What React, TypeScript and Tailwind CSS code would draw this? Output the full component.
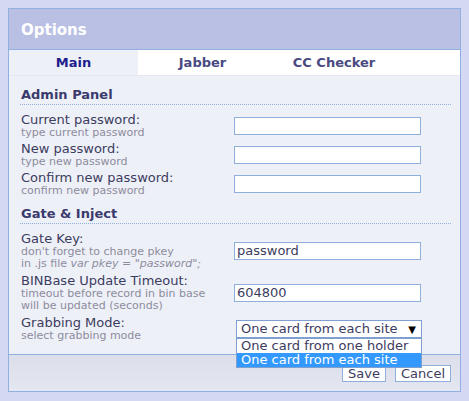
import React from 'react';

interface FieldRowProps {
    label: string;
    hint: React.ReactNode;
    children: React.ReactNode;
}

const FieldRow = ({ label, hint, children }: FieldRowProps) => (
    <div className="grid grid-cols-[213px_1fr] items-center">
        <div>
            <p className="text-[13px] leading-[14px] text-[#3c3c5e]">{label}</p>
            <p className="text-[11px] leading-[12px] text-[#8c8c9c]">{hint}</p>
        </div>
        <div>{children}</div>
    </div>
);

const TextInput = ({ value = '' }: { value?: string }) => (
    <div className="w-[187px] h-[18px] bg-white border border-[#8fb0dc] px-[2px] text-[13px] leading-[16px] text-[#3c3c5e]">
        {value}
    </div>
);

const SectionTitle = ({ children }: { children: React.ReactNode }) => (
    <h2 className="text-[13px] font-bold leading-[16px] text-[#3a3a6c] pb-[1px] border-b border-dotted border-[#8fb0dc] mr-[9px] -ml-[1px] pl-[1px]">
        {children}
    </h2>
);

const App = () => {
    return (
        <div className="min-h-[401px] bg-[#d4d8f2] p-2 font-['DejaVu_Sans',Verdana,sans-serif]">
            <div className="w-[453px] border border-[#8fb0e0] bg-[#eef0f8]">
                {/* header */}
                <div className="h-[41px] bg-[#b9c0e3] flex items-center pl-3 pt-[2px] border-b border-[#8fb0e0]">
                    <h1 className="text-[15px] font-bold text-white">Options</h1>
                </div>

                {/* tabs */}
                <div className="flex h-[26px] bg-white border-b border-[#e6e7f0]">
                    <div className="w-[129px] bg-[#eef0f8] flex items-center justify-center pt-[1px] text-[13px] font-bold text-[#1e1e8c]">Main</div>
                    <div className="w-[129px] flex items-center justify-center pt-[1px] text-[13px] font-bold text-[#4a4a82]">Jabber</div>
                    <div className="w-[134px] flex items-center justify-center pt-[1px] text-[13px] font-bold text-[#4a4a82]">CC Checker</div>
                </div>

                {/* content */}
                <div className="pl-3 pt-[11px] pb-[12px]">
                    <SectionTitle>Admin Panel</SectionTitle>
                    <div className="flex flex-col gap-[3px] mt-[8px]">
                        <FieldRow label="Current password:" hint="type current password">
                            <TextInput />
                        </FieldRow>
                        <FieldRow label="New password:" hint="type new password">
                            <TextInput />
                        </FieldRow>
                        <FieldRow label="Confirm new password:" hint="confirm new password">
                            <TextInput />
                        </FieldRow>
                    </div>

                    <div className="mt-[9px]">
                        <SectionTitle>Gate &amp; Inject</SectionTitle>
                    </div>
                    <div className="flex flex-col gap-[4px] mt-[8px]">
                        <FieldRow
                            label="Gate Key:"
                            hint={<>don't forget to change pkey<br />in .js file <i>var pkey = "password";</i></>}
                        >
                            <TextInput value="password" />
                        </FieldRow>
                        <FieldRow
                            label="BINBase Update Timeout:"
                            hint={<>timeout before record in bin base<br />will be updated (seconds)</>}
                        >
                            <TextInput value="604800" />
                        </FieldRow>
                        <FieldRow label="Grabbing Mode:" hint="select grabbing mode">
                            <div className="relative ml-[2px] w-[186px]">
                                <div className="h-[18px] bg-white border border-[#7f9fd0] flex items-center justify-between pl-[4px] pr-[5px] text-[13px] text-[#3c3c5e]">
                                    <span>One card from each site</span>
                                    <span className="text-[10px] text-black">▼</span>
                                </div>
                                <div className="absolute left-0 top-[18px] w-[186px] bg-white border border-[#7f9fd0] text-[13px] leading-[14px] z-10">
                                    <div className="pl-[4px] text-[#3c3c5e]">One card from one holder</div>
                                    <div className="pl-[4px] bg-[#3399ff] text-white">One card from each site</div>
                                </div>
                            </div>
                        </FieldRow>
                    </div>
                </div>

                {/* footer */}
                <div className="h-[37px] border-t border-[#8fb0e0] bg-gradient-to-b from-[#dcdeea] to-[#e4e6f2] flex items-center justify-end gap-[9px] pr-[9px]">
                    <button className="w-[44px] h-[17px] bg-white border border-[#8fb0dc] text-[13px] leading-[15px] text-[#3c3c5e]">Save</button>
                    <button className="w-[56px] h-[17px] bg-white border border-[#8fb0dc] text-[13px] leading-[15px] text-[#3c3c5e]">Cancel</button>
                </div>
            </div>
        </div>
    );
};

export default App;
